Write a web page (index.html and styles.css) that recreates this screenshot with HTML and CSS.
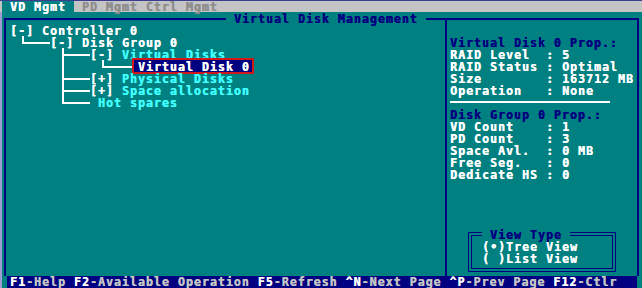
FILE: index.html
```html
<!DOCTYPE html>
<html>
<head>
<meta charset="utf-8">
<title>Virtual Disk Management</title>
<link rel="stylesheet" href="styles.css">
</head>
<body>
<div class="screen">
  <div class="tabs">
    <span class="tab active"> VD Mgmt </span>
    <span class="tab"> PD Mgmt </span>
    <span class="tab">Ctrl Mgmt</span>
  </div>
  <div class="frame">
    <div class="frame-title"> Virtual Disk Management </div>
    <div class="tree">
      <div class="row">[-] Controller 0</div>
      <div class="row"> <span class="elbow"></span>[-] Disk Group 0</div>
      <div class="row">      <span class="tee"></span>[-] <span class="cyan">Virtual Disks</span></div>
      <div class="row">      <span class="pipe"></span>    <span class="elbow long"></span><span class="sel">Virtual Disk 0</span></div>
      <div class="row">      <span class="tee"></span>[+] <span class="cyan">Physical Disks</span></div>
      <div class="row">      <span class="tee"></span>[+] <span class="cyan">Space allocation</span></div>
      <div class="row">      <span class="elbow"></span> <span class="cyan">Hot spares</span></div>
    </div>
    <div class="props">
      <div class="heading">Virtual Disk 0 Prop.:</div>
      <div class="prop"><span>RAID Level</span><span>: 5</span></div>
      <div class="prop"><span>RAID Status</span><span>: Optimal</span></div>
      <div class="prop"><span>Size</span><span>: 163712 MB</span></div>
      <div class="prop"><span>Operation</span><span>: None</span></div>
      <div class="rule"></div>
      <div class="heading">Disk Group 0 Prop.:</div>
      <div class="prop"><span>VD Count</span><span>: 1</span></div>
      <div class="prop"><span>PD Count</span><span>: 3</span></div>
      <div class="prop"><span>Space Avl.</span><span>: 0 MB</span></div>
      <div class="prop"><span>Free Seg.</span><span>: 0</span></div>
      <div class="prop"><span>Dedicate HS</span><span>: 0</span></div>
      <div class="viewtype">
        <div class="vt-label"> View Type </div>
        <div class="opt">(•)Tree View</div>
        <div class="opt">( )List View</div>
      </div>
    </div>
  </div>
  <div class="status"><span class="key">F1</span>-Help <span class="key">F2</span>-Available Operation <span class="key">F5</span>-Refresh <span class="key">^N</span>-Next Page <span class="key">^P</span>-Prev Page <span class="key">F12</span>-Ctlr</div>
</div>
</body>
</html>
```
FILE: styles.css
```css
* { box-sizing: border-box; }
html, body { margin: 0; padding: 0; }
body {
  width: 642px;
  height: 288px;
  overflow: hidden;
  background: #008080;
  font-family: "DejaVu Sans Mono", monospace;
  font-weight: bold;
  font-size: 11.627px;
  letter-spacing: 1px;
  line-height: 14px;
  color: #ffffff;
  text-shadow: 0.4px 0 0 currentColor;
}
.screen {
  width: 642px;
  height: 288px;
  background: #008080;
  box-shadow: inset 2px 0 0 #9c9cd2;
}
.tabs {
  display: flex;
  height: 12px;
  padding-left: 2px;
  background: #c4c4c4;
  border-top: 1px solid #3c3c90;
}
.tab {
  height: 11px;
  line-height: 13px;
  color: #8e8e8e;
  white-space: pre;
}
.tab.active {
  background: #008080;
  color: #ffffff;
}
.frame {
  position: relative;
  display: grid;
  grid-template-columns: 439px 1fr;
  width: 635px;
  height: 258px;
  margin: 6px 0 0 4px;
  border: 2px solid #000080;
  border-bottom: 0;
}
.frame-title {
  position: absolute;
  left: 220px;
  top: -8px;
  height: 12px;
  background: #008080;
  color: #000080;
  white-space: pre;
}
.tree {
  padding: 4px 0 0 4px;
}
.row {
  height: 12px;
  white-space: pre;
}
.cyan { color: #40ffff; }
.tee, .elbow, .pipe {
  display: inline-block;
  vertical-align: top;
  height: 12px;
}
.tee {
  width: 32px;
  background:
    linear-gradient(#fff, #fff) 4px 0 / 2px 12px no-repeat,
    linear-gradient(#fff, #fff) 4px 6px / 28px 2px no-repeat;
}
.elbow {
  width: 32px;
  background:
    linear-gradient(#fff, #fff) 4px 0 / 2px 8px no-repeat,
    linear-gradient(#fff, #fff) 4px 6px / 28px 2px no-repeat;
}
.elbow.long {
  width: 34px;
  background:
    linear-gradient(#fff, #fff) 4px 0 / 2px 8px no-repeat,
    linear-gradient(#fff, #fff) 4px 6px / 30px 2px no-repeat;
}
.pipe {
  width: 8px;
  background: linear-gradient(#fff, #fff) 4px 0 / 2px 12px no-repeat;
}
.sel {
  display: inline-block;
  vertical-align: top;
  height: 12px;
  margin-left: 2px;
  padding: 0 2px 0 4px;
  background: #000080;
  color: #ffffff;
  outline: 2px solid #d01818;
}
.props {
  border-left: 2px solid #000080;
  padding: 16px 0 0 3px;
}
.heading {
  height: 12px;
  color: #000080;
  white-space: pre;
}
.prop {
  display: grid;
  grid-template-columns: 96px auto;
  height: 12px;
  white-space: pre;
}
.rule {
  width: 160px;
  height: 12px;
  background: linear-gradient(#fff, #fff) 0 5px / 160px 2px no-repeat;
}
.viewtype {
  position: relative;
  width: 148px;
  height: 40px;
  margin: 52px 0 0 18px;
  padding: 7px 0 0 13px;
  border: 1px solid #000080;
  box-shadow: inset 0 0 0 2px #008080, inset 0 0 0 3px #000080;
}
.vt-label {
  position: absolute;
  left: 13px;
  top: -5px;
  height: 12px;
  background: #008080;
  color: #000080;
  white-space: pre;
}
.opt {
  height: 12px;
  white-space: pre;
}
.status {
  width: 630px;
  height: 12px;
  margin-left: 7px;
  padding-left: 3px;
  line-height: 13px;
  background: #000080;
  color: #c4c4c4;
  white-space: pre;
}
.key { color: #ffffff; }
```
